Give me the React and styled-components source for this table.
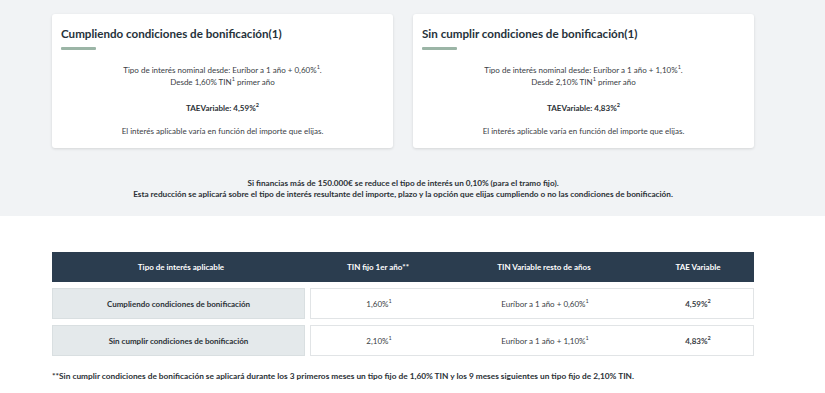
import styled, { createGlobalStyle } from "styled-components"

const GlobalStyle = createGlobalStyle`
  html, body {
    margin: 0;
    padding: 0;
    background: #ffffff;
  }
  body {
    font-family: 'Lato', 'Noto Sans', sans-serif;
    color: #2f3437;
  }
`

const cards = [
  { title: "Cumpliendo condiciones de bonificación(1)", diff: "0,60%", first: "1,60%", tae: "4,59%" },
  { title: "Sin cumplir condiciones de bonificación(1)", diff: "1,10%", first: "2,10%", tae: "4,83%" },
]

const rows = [
  { label: "Cumpliendo condiciones de bonificación", fixed: "1,60%", variable: "Euríbor a 1 año + 0,60%", tae: "4,59%" },
  { label: "Sin cumplir condiciones de bonificación", fixed: "2,10%", variable: "Euríbor a 1 año + 1,10%", tae: "4,83%" },
]

export default function App() {
  return (
    <Page>
      <GlobalStyle />
      <TopSection>
        <Inner>
          <CardRow>
            {cards.map((c) => (
              <Card key={c.title}>
                <CardTitle>{c.title}</CardTitle>
                <TitleBar />
                <CardBody>
                  <p>Tipo de interés nominal desde: Euríbor a 1 año + {c.diff}<Sup>1</Sup>.</p>
                  <p>Desde {c.first} TIN<Sup>1</Sup> primer año</p>
                </CardBody>
                <CardTae>TAEVariable: {c.tae}<Sup>2</Sup></CardTae>
                <CardNote>El interés aplicable varía en función del importe que elijas.</CardNote>
              </Card>
            ))}
          </CardRow>
          <Notice>
            <p>Si financias más de 150.000€ se reduce el tipo de interés un 0,10% (para el tramo fijo).</p>
            <p>Esta reducción se aplicará sobre el tipo de interés resultante del importe, plazo y la opción que elijas cumpliendo o no las condiciones de bonificación.</p>
          </Notice>
        </Inner>
      </TopSection>
      <BottomSection>
        <Inner>
          <TableHead>
            <HeadCell>Tipo de interés aplicable</HeadCell>
            <HeadCell>TIN fijo 1er año**</HeadCell>
            <HeadCell>TIN Variable resto de años</HeadCell>
            <HeadCell>TAE Variable</HeadCell>
          </TableHead>
          {rows.map((r) => (
            <TableRow key={r.label}>
              <LabelCell>{r.label}</LabelCell>
              <ValueCell>
                <Value>{r.fixed}<Sup>1</Sup></Value>
                <Value>{r.variable}<Sup>1</Sup></Value>
                <Value bold>{r.tae}<Sup>2</Sup></Value>
              </ValueCell>
            </TableRow>
          ))}
          <Footnote>
            **Sin cumplir condiciones de bonificación se aplicará durante los 3 primeros meses un tipo fijo de 1,60% TIN y los 9 meses siguientes un tipo fijo de 2,10% TIN.
          </Footnote>
        </Inner>
      </BottomSection>
    </Page>
  )
}

const Page = styled.div`
  width: 825px;
  min-height: 393px;
  background: #ffffff;
`
const TopSection = styled.section`
  background: #f1f3f5;
  padding: 14px 0 16px;
`
const BottomSection = styled.section`
  background: #ffffff;
  padding-top: 36px;
`
const Inner = styled.div`
  width: 702px;
  margin-left: 52px;
`
const CardRow = styled.div`
  display: grid;
  grid-template-columns: 1fr 1fr;
  gap: 20px;
`
const Card = styled.div`
  background: #ffffff;
  border-radius: 3px;
  box-shadow: 0 1px 3px rgba(0, 0, 0, 0.12);
  padding: 12px 9px 11px;
  height: 134px;
  box-sizing: border-box;
`
const CardTitle = styled.h2`
  margin: 0;
  font-size: 11.6px;
  line-height: 16px;
  font-weight: 700;
  color: #25313a;
`
const TitleBar = styled.div`
  width: 35px;
  height: 3px;
  margin-top: 5px;
  background: #9bb5a6;
  border-radius: 1px;
`
const CardBody = styled.div`
  margin-top: 14px;
  text-align: center;
  font-size: 8px;
  line-height: 12px;
  color: #3a4045;
  p {
    margin: 0;
  }
`
const CardTae = styled.p`
  margin: 14px 0 0;
  text-align: center;
  font-size: 8px;
  line-height: 12px;
  font-weight: 700;
  color: #2b3136;
`
const CardNote = styled.p`
  margin: 11px 0 0;
  text-align: center;
  font-size: 8px;
  line-height: 12px;
  color: #3a4045;
`
const Sup = styled.sup`
  font-size: 5.5px;
  line-height: 0;
  vertical-align: 4px;
`
const Notice = styled.div`
  margin-top: 30px;
  text-align: center;
  font-size: 8.2px;
  line-height: 11px;
  font-weight: 700;
  color: #2b3136;
  p {
    margin: 0;
  }
`
const TableHead = styled.div`
  display: grid;
  grid-template-columns: 258px 136px 196px 1fr;
  height: 30px;
  align-items: center;
  background: #2b3d4f;
`
const HeadCell = styled.div`
  text-align: center;
  color: #ffffff;
  font-size: 8px;
  font-weight: 700;
`
const TableRow = styled.div`
  display: grid;
  grid-template-columns: 253px 1fr;
  gap: 5px;
  margin-top: 6px;
  height: 31px;
`
const LabelCell = styled.div`
  display: flex;
  align-items: center;
  justify-content: center;
  background: #e4e9eb;
  border: 1px solid #d9dfe1;
  font-size: 8px;
  font-weight: 700;
  color: #2b3136;
`
const ValueCell = styled.div`
  display: grid;
  grid-template-columns: 136px 196px 1fr;
  align-items: center;
  background: #ffffff;
  border: 1px solid #e1e4e6;
  box-sizing: border-box;
`
const Value = styled.div`
  text-align: center;
  font-size: 8px;
  font-weight: ${(props) => (props.bold ? 700 : 400)};
  color: #3a4045;
`
const Footnote = styled.p`
  margin: 15px 0 0;
  font-size: 8.3px;
  line-height: 11px;
  font-weight: 700;
  color: #2b3136;
`
